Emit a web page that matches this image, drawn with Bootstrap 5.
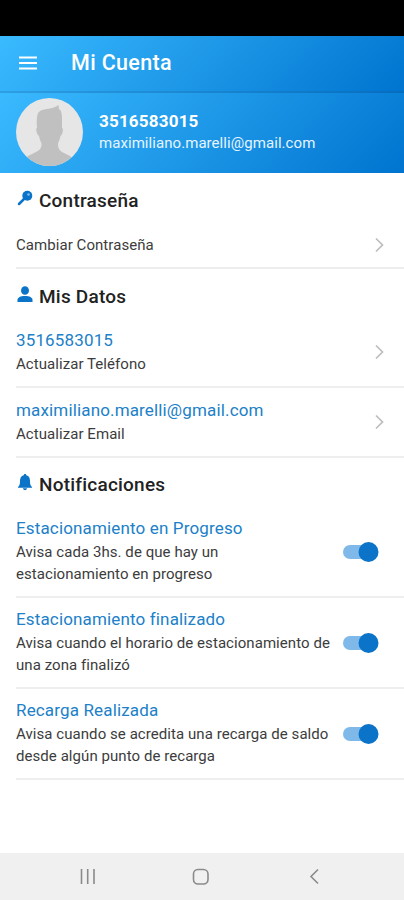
<!DOCTYPE html>
<html lang="es">
<head>
<meta charset="utf-8">
<meta name="viewport" content="width=device-width, initial-scale=1">
<title>Mi Cuenta</title>
<link href="https://cdn.jsdelivr.net/npm/bootstrap@5.3.0/dist/css/bootstrap.min.css" rel="stylesheet">
<style>
body { font-family: Roboto, "Liberation Sans", sans-serif; color: #222; background: #fff; }
.screen { height: 900px; }
.status { height: 36px; background: #000; }
.blue { background: linear-gradient(135deg, #3abaff 0%, #0074cf 100%); color: #fff; }
.topbar { height: 57px; padding: 0 0 1px 18px; gap: 33px; border-bottom: 2px solid rgba(0, 50, 110, .2); }
.topbar h1 { font-size: 21.5px; font-weight: 500; letter-spacing: .35px; line-height: 24px; }
.profile { height: 80px; padding: 0 16px 2px; gap: 16px; }
.who { font-size: 17px; font-weight: 700; letter-spacing: .2px; line-height: 21px; }
.mail { font-size: 15px; letter-spacing: .06px; line-height: 22px; color: #e6f4ff; }
.sect { height: 49px; padding: 6px 0 0 16px; gap: 5px; font-size: 19px; font-weight: 500; letter-spacing: .22px; line-height: 24px; }
.sect svg { margin-top: -6px; }
.line { margin-left: 16px; padding-right: 17px; border-bottom: 2px solid #eee; }
.h-one { height: 47px; }
.h-two { height: 70px; }
.h-two > div { padding-top: 2px; }
.h-three { height: 91px; }
.ttl { font-size: 17px; letter-spacing: .15px; color: #2080c8; line-height: 24px; margin-top: -2px; white-space: nowrap; }
.sub { font-size: 15px; letter-spacing: .06px; color: #3c3c3c; line-height: 21.5px; white-space: nowrap; }
.h-one .sub { padding-top: 2px; }
.ttl + .sub { margin-top: 2px; }
.toggle { width: 45px; flex: none; margin-right: 2px; }
.sect-end { padding-top: 4px; }
.sysnav { height: 47px; background: #f0f0f0; }
</style>
</head>
<body>
<div class="screen d-flex flex-column overflow-hidden">
  <div class="status flex-shrink-0"></div>
  <header class="topbar blue d-flex align-items-center flex-shrink-0">
    <svg width="20" height="16" viewBox="0 0 20 16" stroke="#fff" stroke-width="2"><path d="M1 2.500h18M1 8h18M1 13.500h18"/></svg>
    <h1 class="m-0">Mi Cuenta</h1>
  </header>
  <section class="profile blue d-flex align-items-center flex-shrink-0">
    <svg width="67" height="68" viewBox="0 0 67 68">
      <defs><clipPath id="disc"><ellipse cx="33.500" cy="34" rx="33.500" ry="34"/></clipPath></defs>
      <g clip-path="url(#disc)"><path fill="#e6e6e6" d="M0 0h67v68H0z"/>
      <path fill="#c0c0c0" d="M21 30c-.5-6-.5-11 1-15 3-4 8-3.500 12-4.500 3-.8 6-1.500 8.500-3.500.5 2 0 3.500 1 4.500 2 1 2.500 5 2.500 9V30c1.500 0 1 5-.5 7-1 .5-1 1-1.500 3-.5 3-2 4-2 6 0 4 1 6 4 8l6 3c4 2 6 4 6 11H8c0-7 2-9 6-11l6-3c4-2 5.500-4 5.500-8 0-2-1.500-3-2-6-.5-2-.5-2.500-1.500-3-1.500-2-2.500-7-1-7z"/></g>
    </svg>
    <div>
      <div class="who">3516583015</div>
      <div class="mail">maximiliano.marelli@gmail.com</div>
    </div>
  </section>
  <main class="flex-grow-1">
    <h2 class="sect m-0 d-flex align-items-center">
      <svg width="18" height="18" viewBox="0 0 18 18"><path d="M9 9 3 15" stroke="#0b73c8" stroke-width="2.500" stroke-linecap="round"/><circle cx="11.300" cy="6.700" r="5" fill="#0b73c8"/><circle cx="12.500" cy="5.500" r="1.300" fill="#7fbcec"/></svg>
      Contraseña
    </h2>
    <div class="line h-one d-flex align-items-center justify-content-between">
      <div class="sub">Cambiar Contraseña</div>
      <svg width="16" height="16" viewBox="0 0 16 16" fill="none" stroke="#bdbdbd" stroke-width="1.700"><path d="m5 1.500 6.500 6.500L5 14.500"/></svg>
    </div>
    <h2 class="sect m-0 d-flex align-items-center">
      <svg width="18" height="18" viewBox="0 0 18 18" fill="#0b73c8"><ellipse cx="9" cy="5.500" rx="4" ry="4.300"/><path d="M1.500 17v-2c0-2.500 3-4 7.500-4s7.500 1.500 7.500 4v2z"/></svg>
      Mis Datos
    </h2>
    <div class="line h-two d-flex align-items-center justify-content-between">
      <div><div class="ttl">3516583015</div><div class="sub">Actualizar Teléfono</div></div>
      <svg width="16" height="16" viewBox="0 0 16 16" fill="none" stroke="#bdbdbd" stroke-width="1.700"><path d="m5 1.500 6.500 6.500L5 14.500"/></svg>
    </div>
    <div class="line h-two d-flex align-items-center justify-content-between">
      <div><div class="ttl">maximiliano.marelli@gmail.com</div><div class="sub">Actualizar Email</div></div>
      <svg width="16" height="16" viewBox="0 0 16 16" fill="none" stroke="#bdbdbd" stroke-width="1.700"><path d="m5 1.500 6.500 6.500L5 14.500"/></svg>
    </div>
    <h2 class="sect sect-end m-0 d-flex align-items-center">
      <svg width="18" height="18" viewBox="0 0 18 18" fill="#0b73c8"><path d="M9 1c.8 0 1.300.5 1.300 1.300C13 3 14 5 14 8c0 3.500.5 4.500 2 6v.8H2V14c1.500-1.500 2-2.500 2-6 0-3 1-5 3.700-5.700C7.700 1.500 8.200 1 9 1zM7 15.300h4c0 1-.8 1.800-2 1.800s-2-.8-2-1.800z"/></svg>
      Notificaciones
    </h2>
    <div class="line h-three d-flex align-items-center justify-content-between">
      <div><div class="ttl">Estacionamiento en Progreso</div><div class="sub">Avisa cada 3hs. de que hay un<br>estacionamiento en progreso</div></div>
      <svg class="toggle" height="24" viewBox="0 0 45 24"><rect x="3" y="5" width="34" height="14" rx="7" fill="#7fb9e9"/><circle cx="28.500" cy="12" r="10" fill="#0b73c8"/></svg>
    </div>
    <div class="line h-three d-flex align-items-center justify-content-between">
      <div><div class="ttl">Estacionamiento finalizado</div><div class="sub">Avisa cuando el horario de estacionamiento de<br>una zona finalizó</div></div>
      <svg class="toggle" height="24" viewBox="0 0 45 24"><rect x="3" y="5" width="34" height="14" rx="7" fill="#7fb9e9"/><circle cx="28.500" cy="12" r="10" fill="#0b73c8"/></svg>
    </div>
    <div class="line h-three d-flex align-items-center justify-content-between">
      <div><div class="ttl">Recarga Realizada</div><div class="sub">Avisa cuando se acredita una recarga de saldo<br>desde algún punto de recarga</div></div>
      <svg class="toggle" height="24" viewBox="0 0 45 24"><rect x="3" y="5" width="34" height="14" rx="7" fill="#7fb9e9"/><circle cx="28.500" cy="12" r="10" fill="#0b73c8"/></svg>
    </div>
  </main>
  <footer class="sysnav d-flex align-items-center flex-shrink-0">
    <svg width="404" height="47" viewBox="0 0 404 47" fill="none" stroke="#8a8a8a" stroke-width="1.600"><path d="M81.500 16v15M87.700 16v15M94 16v15M318 16.500l-7 7 7 7"/><rect x="193.500" y="16.500" width="14.500" height="14.500" rx="4.500"/></svg>
  </footer>
</div>
<script src="https://cdn.jsdelivr.net/npm/bootstrap@5.3.0/dist/js/bootstrap.bundle.min.js"></script>
</body>
</html>
